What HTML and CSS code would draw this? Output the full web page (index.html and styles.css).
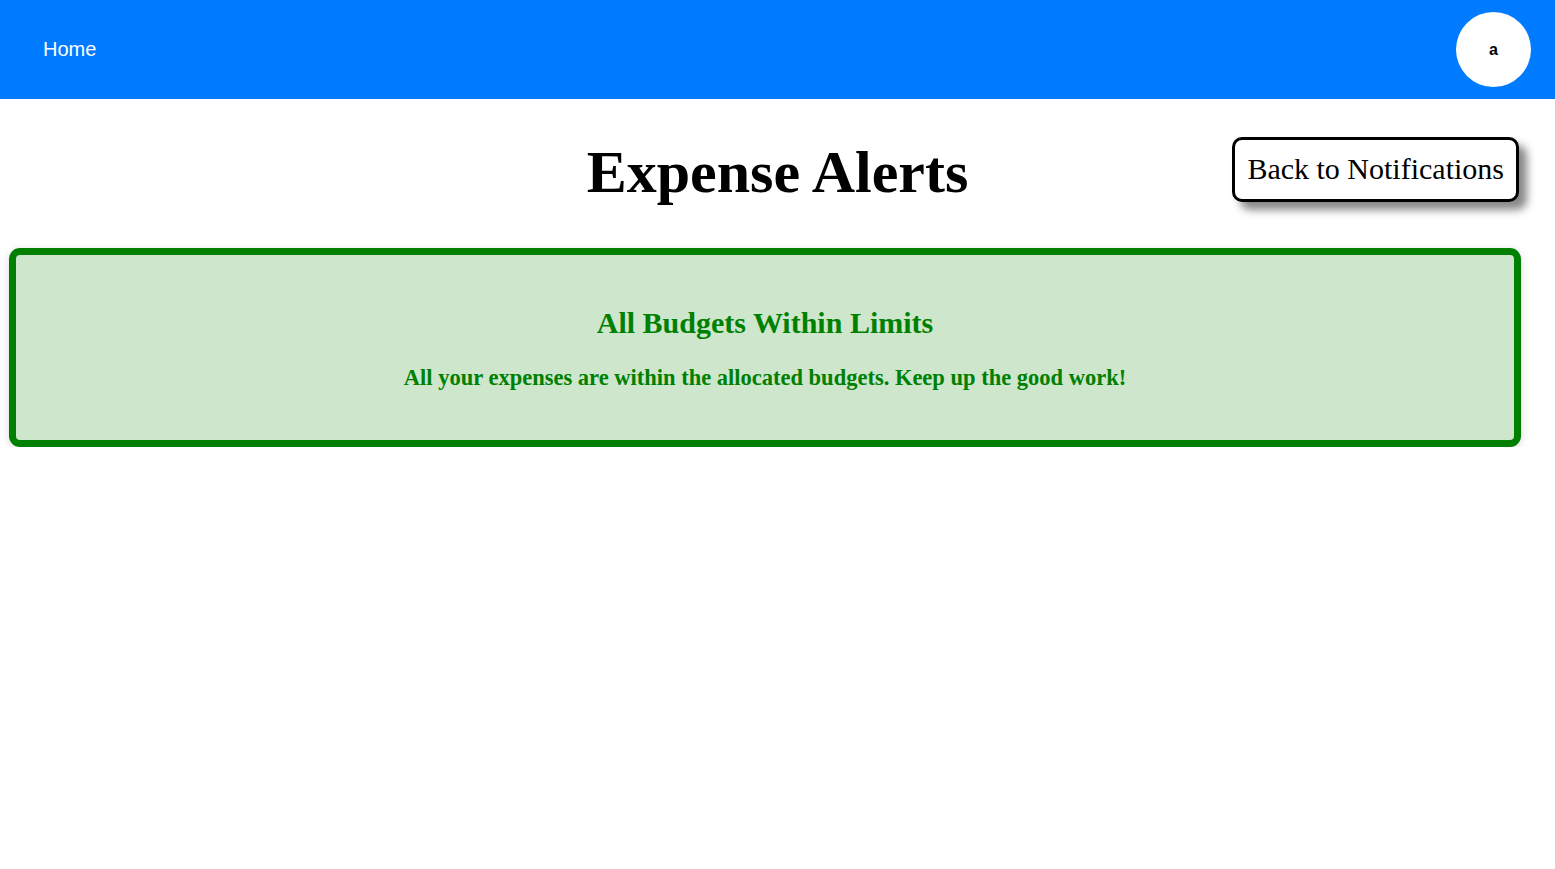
FILE: index.html
```html
<!DOCTYPE html>
<html>
<head lang="en">
    <meta charset="UTF-8">
    <title>Expense Alerts</title>
    <link rel="stylesheet" href="styles.css">
</head>
<body>
<div class="navbar">
    <a class="nav-link" href="#">Home</a>
    <div class="avatar">a</div>
</div>

<div class="page">
    <div class="page-head">
        <h1 class="title">Expense Alerts</h1>
        <button class="back-btn">Back to Notifications</button>
    </div>

    <div class="alert ok">
        <h2>All Budgets Within Limits</h2>
        <p>All your expenses are within the allocated budgets. Keep up the good work!</p>
    </div>
</div>
</body>
</html>
```

FILE: styles.css
```css
* {
    padding: 0;
    margin: 0;
    box-sizing: border-box;
}

body {
    font-family: "Liberation Serif", "Times New Roman", serif;
    background: #fff;
    color: #000;
}

.navbar {
    height: 99px;
    background: #007bff;
    display: flex;
    align-items: center;
    justify-content: space-between;
    padding: 0 24px 0 43px;
}

.nav-link {
    font-family: "Liberation Sans", Arial, sans-serif;
    font-size: 20px;
    color: #fff;
    text-decoration: none;
}

.avatar {
    width: 75px;
    height: 75px;
    border-radius: 50%;
    background: #fff;
    display: flex;
    align-items: center;
    justify-content: center;
    font-family: "Liberation Sans", Arial, sans-serif;
    font-weight: bold;
    font-size: 16px;
}

.page-head {
    position: relative;
    height: 149px;
    display: flex;
    align-items: center;
    justify-content: center;
}

.title {
    font-size: 60px;
    font-weight: bold;
    margin-top: -3px;
}

.back-btn {
    position: absolute;
    right: 36px;
    top: 38px;
    font-family: "Liberation Serif", "Times New Roman", serif;
    font-size: 30px;
    background: #fff;
    color: #000;
    border: 3px solid #000;
    border-radius: 10px;
    padding: 12px 12px 13px;
    box-shadow: 8px 8px 8px #888;
    cursor: pointer;
}

.alert {
    margin: 0 34px 0 9px;
    height: 199px;
    border: 7px solid #008000;
    border-radius: 11px;
    background: #cde6cc;
    box-shadow: 0 2px 8px rgba(0, 0, 0, 0.15);
    color: #008000;
    text-align: center;
    padding-top: 51px;
}

.alert h2 {
    font-size: 30px;
    font-weight: bold;
}

.alert p {
    font-size: 22.5px;
    font-weight: bold;
    margin-top: 25px;
}
```
